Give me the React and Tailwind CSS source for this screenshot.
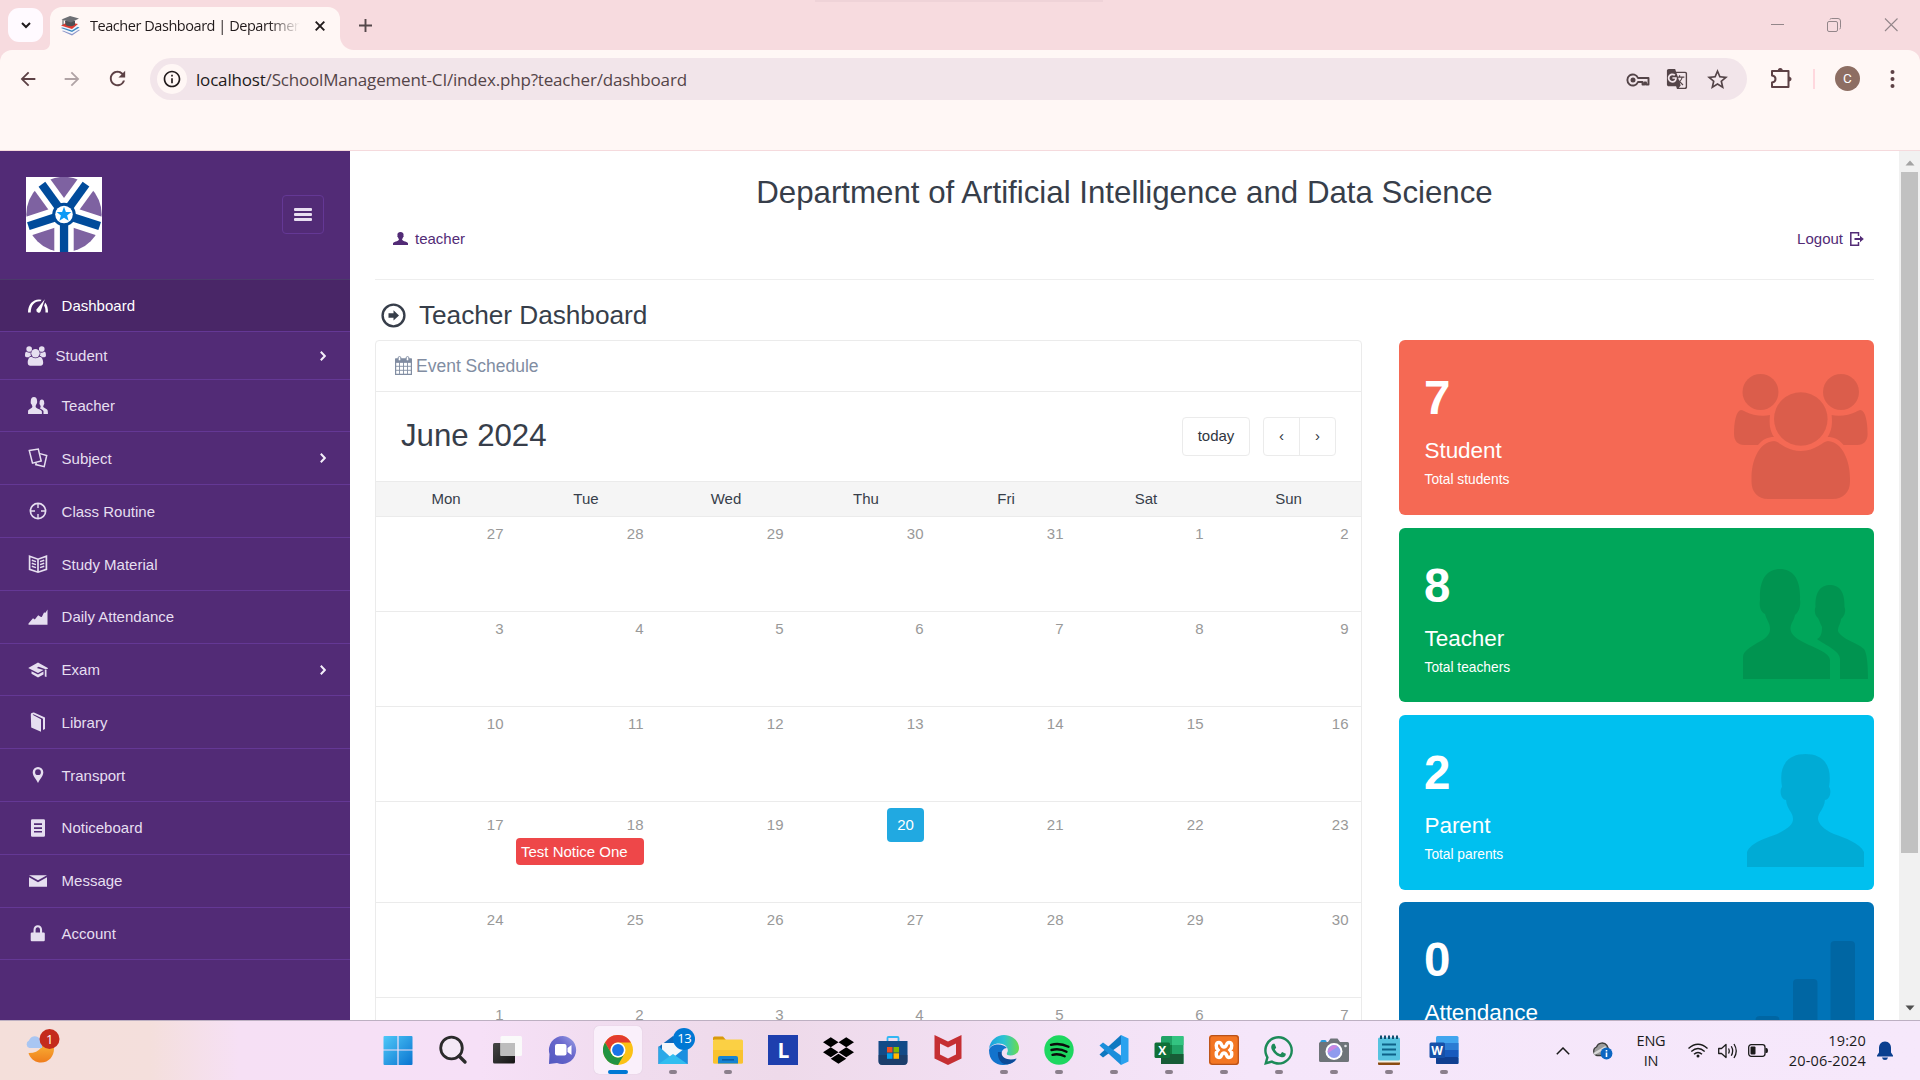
import React from "react";
import { MdStarBorder, MdOutlineInfo, MdArrowBack, MdArrowForward, MdRefresh, MdGTranslate } from "react-icons/md";
import { FaDropbox, FaWhatsapp } from "react-icons/fa";

const GROUP = (
  <>
    <ellipse cx="26.5" cy="18" rx="18" ry="18" />
    <ellipse cx="107" cy="18" rx="18" ry="18" />
    <circle cx="66.8" cy="45" r="26.8" />
    <path d="M7 36C2 37 0 48 0 60C0 67 4 71 10 71H24C29 65 34 63 40 63C36 57 35 50 36 41C28 43 18 41 12 38C10 37 9 36 7 36Z" />
    <path d="M126.600 36C131.600 37 133.600 48 133.600 60C133.600 67 129.600 71 123.600 71H109.600C104.600 65 99.600 63 93.600 63C97.600 57 98.600 50 97.600 41C105.600 43 115.600 41 121.600 38C123.600 37 124.600 36 126.600 36Z" />
    <path d="M40 67C24 68 17.500 88 17.500 104V108C17.500 118 24 125 34 125H99C109 125 116 118 116 108V104C116 88 109 68 94 67C89 67 82 77 66.800 77C52 77 45 67 40 67Z" />
  </>
);
const PAIR = (
  <>
    <path d="M0 110V88C0 82 8 78 14 74C22 70 27 66 27 60C27 54 24 52 22 45C17 43 16 36 17 31C16 10 24 0 37 0C50 0 58 10 57 31C58 36 56 43 52 46C51 52 47.500 54 47.500 60C48 66 54 70 62 74C72 79 87 84 87 91V110Z" />
    <path d="M97 110V90C97 82 82 76 74 70C78 68 79 64 79 58C77 54 76 51 75 49C72 47 71 41 72.500 38C72 22 78 16 87 16C96 16 102 22 101.500 38C103 41 102 47 98 50C98 54 95 57 95 62C98 70 115 74 121 80C124 84 125 96 125 110Z" />
  </>
);
const PERSON = (
  <path d="M0 113V98C4 88 20 84 30 80C42 74 46 70 46 65C46 58 40 56 39 46C34 46 32 36 35 33C31 10 42 0 58.500 0C75 0 86 10 82 33C85 36 83 46 78 46C77 56 71 58 71 65C72 70 76 75 87 80C98 84 113 89 117 98V113Z" />
);

/* ---------- Sidebar icons ---------- */
const s = { width: 20, height: 20, viewBox: "0 0 20 20", fill: "currentColor" };
const ln = { fill: "none", stroke: "currentColor", strokeWidth: 1.7 };
const GaugeIcon = () => (
  <svg {...s}>
    <path d="M0 16.500C0 8.500 4.500 3.800 11 3.500L13.500 3.700L12.600 5.300C6.500 4.900 3 9 2.700 16.500Z" />
    <path d="M16.800 3.300L12.700 15.200A2.200 2.200 0 1 1 8.500 13.600Z" />
    <path d="M17.200 6.500C19.300 9.300 20 12 20 16.500H17.500C17.500 13 17.200 11.500 16.100 9.600Z" />
  </svg>
);
const GroupIcon = () => <svg width="21" height="20" viewBox="0 0 134 126" fill="currentColor">{GROUP}</svg>;
const PairIcon = () => <svg width="20" height="17.500" viewBox="0 0 125 110" fill="currentColor">{PAIR}</svg>;
const DocsIcon = () => (
  <svg {...s}>
    <path {...ln} strokeWidth="1.500" d="M1.300 2.600L10.300 1L13.200 13L4.500 15.200Z" />
    <path {...ln} strokeWidth="1.500" d="M12 5.600L18.700 7.500L16.200 18.700L7.800 16.600L8.200 14.800" />
  </svg>
);
const TargetIcon = () => (
  <svg {...s}>
    <circle {...ln} cx="10" cy="10" r="7.600" />
    <path {...ln} strokeWidth="1.400" d="M10 3V7M10 13V17M3 10H7M13 10H17" />
  </svg>
);
const BookIcon = () => (
  <svg {...s}>
    <path {...ln} strokeWidth="1.700" d="M1.600 2.300L10 5.200L18.400 2.300V15.300L10 18.200L1.600 15.300ZM10 5V18" />
    <path {...ln} strokeWidth="1.500" d="M3.800 6.200L8 7.600M3.800 9.200L8 10.600M3.800 12.200L8 13.600M16.200 6.200L12 7.600M16.200 9.200L12 10.600M16.200 12.200L12 13.600" />
  </svg>
);
const ChartIcon = () => (
  <svg {...s}><path d="M0.500 17.700V16.500L5 11.200L6.800 12.500L10.200 8.200L12.500 9.800L13.800 10L16 5.500L17.500 5.700L19.500 2.500V17.700Z" /></svg>
);
const CapIcon = () => (
  <svg {...s}>
    <path d="M0.200 8L10 2.400L19.800 7.900V9H17L10.500 6.800L8.800 8L15.500 10L10 12.900Z" />
    <path d="M3.500 11.200L10 14.500L15.500 11.600V14.500L10 17.500L3.500 13.800Z" />
    <path d="M16.800 9.500H18.500V17L16.800 16.500Z" />
  </svg>
);
const LibIcon = () => (
  <svg {...s}>
    <path d="M2.800 2.500C2.800 1 5.300 0.200 6.500 0.800L17 5.500V17L15 18V6.800L5.500 2.200L4.600 2.800L13 7.200V19.800L3.200 15.500Z" />
  </svg>
);
const PinIcon = () => (
  <svg {...s}><path fillRule="evenodd" d="M10 2A5.300 5.300 0 0 1 15.300 7.300C15.300 11 12 14 10 18C8 14 4.700 11 4.700 7.300A5.300 5.300 0 0 1 10 2ZM10 4.300A2.900 2.900 0 1 0 10 10.100A2.900 2.900 0 1 0 10 4.300Z" /></svg>
);
const NoteIcon = () => (
  <svg {...s}><path fillRule="evenodd" d="M4.300 1.300H15.700Q17 1.300 17 2.600V17.400Q17 18.700 15.700 18.700H4.300Q3 18.700 3 17.400V2.600Q3 1.300 4.300 1.300ZM6 5.300V6.900H14V5.300ZM6 9.300V10.900H14V9.300ZM6 13V14.600H14V13Z" /></svg>
);
const MailIcon = () => (
  <svg {...s}><path d="M1 4.200H19L10 9.200ZM1 6.200L10 11.200L19 6.200V15.800H1Z" /></svg>
);
const LockIcon = () => (
  <svg {...s}><path fillRule="evenodd" d="M4 8.500H5.500V6C5.500 2.800 7.300 1.200 9.800 1.200C12.300 1.200 14.100 2.800 14.100 6V8.500H15.700Q16.800 8.500 16.800 9.600V16Q16.800 17.200 15.700 17.200H3.800Q2.700 17.200 2.700 16V9.600Q2.700 8.500 4 8.500ZM7.600 8.500H12V6C12 4.200 11.200 3.300 9.800 3.300C8.400 3.300 7.600 4.200 7.600 6Z" /></svg>
);

const menu = [
  { label: "Dashboard", icon: GaugeIcon, box: "h-[52px] bg-[#492667] text-white", t: "pt-px" },
  { label: "Student", icon: GroupIcon, box: "h-[48px]", t: "ml-[-6px] pt-px", arrow: true, group: true },
  { label: "Teacher", icon: PairIcon, box: "h-[52px]", t: "" },
  { label: "Subject", icon: DocsIcon, box: "h-[53px]", t: "pt-px", arrow: true },
  { label: "Class Routine", icon: TargetIcon, box: "h-[53px]", t: "pt-px" },
  { label: "Study Material", icon: BookIcon, box: "h-[53px]", t: "pt-px" },
  { label: "Daily Attendance", icon: ChartIcon, box: "h-[53px]", t: "" },
  { label: "Exam", icon: CapIcon, box: "h-[52px]", t: "", arrow: true },
  { label: "Library", icon: LibIcon, box: "h-[53px]", t: "pt-px" },
  { label: "Transport", icon: PinIcon, box: "h-[53px]", t: "pt-px" },
  { label: "Noticeboard", icon: NoteIcon, box: "h-[53px]", t: "" },
  { label: "Message", icon: MailIcon, box: "h-[53px]", t: "" },
  { label: "Account", icon: LockIcon, box: "h-[52px]", t: "" },
];

function CollegeLogo() {
  const spokes = [0, 72, 144, 216, 288];
  return (
    <svg width="76" height="75" viewBox="0 0 76 75">
      <rect width="76" height="75" fill="#fff" />
      <circle cx="38" cy="37.500" r="37.700" fill="#7e62a1" />
      {spokes.map((a) => <rect key={a} x="28.300" y="37.500" width="19.400" height="42" fill="#fff" transform={`rotate(${a} 38 37.500)`} />)}
      {spokes.map((a) => <rect key={a} x="33.900" y="37.500" width="8.300" height="37.500" fill="#004b9b" transform={`rotate(${a} 38 37.500)`} />)}
      <circle cx="38" cy="37.500" r="11.800" fill="#004b9b" />
      <circle cx="38" cy="37.500" r="8.800" fill="#fff" />
      <path fill="#0d9af6" d="M38 29.700L39.900 34.900L45.400 35.100L41.100 38.500L42.600 43.800L38 40.700L33.400 43.800L34.900 38.500L30.600 35.100L36.100 34.900Z" />
    </svg>
  );
}

function Sidebar() {
  return (
    <aside className="w-[350px] shrink-0 bg-[#522b76] text-[15px] text-[#e6dff0]">
      <div className="flex h-[129px] items-start justify-between border-b border-[#4b3a6b] pl-[26px] pr-[26px] pt-[26px]">
        <CollegeLogo />
        <button className="mt-[18px] flex h-[39px] w-[42px] items-center justify-center rounded-[4px] border border-[#643895]">
          <svg width="18" height="13" viewBox="0 0 18 13" fill="#e8def1">
            <rect width="18" height="3" rx="1" /><rect y="5" width="18" height="3" rx="1" /><rect y="10" width="18" height="3" rx="1" />
          </svg>
        </button>
      </div>
      <nav>
        {menu.map(({ label, icon: Icon, box, t, arrow, group }) => (
          <a key={label} className={`flex items-center border-b border-[#643895] pr-[24px] ${group ? "pl-[25px]" : "pl-[28px]"} ${box}`}>
            <span className={`flex shrink-0 ${group ? "w-[21px]" : "w-[20px]"}`}><Icon /></span>
            <span className={`${group ? "pl-[15.600px]" : "pl-[13.600px]"} leading-[20px] ${t}`}>{label}</span>
            {arrow && (
              <svg className="ml-auto" width="6" height="10" viewBox="0 0 6 10" fill="none" stroke="#f4effa" strokeWidth="2"><path d="M0.800 0.800L4.800 5L0.800 9.200" /></svg>
            )}
          </a>
        ))}
      </nav>
    </aside>
  );
}

/* ---------- Browser chrome ---------- */
function Favicon() {
  return (
    <svg width="20" height="20" viewBox="0 0 20 20">
      <path d="M2 15L12 19.500L20 14L10 10Z" fill="#8a94c8" /><path d="M1.500 14L12 18L20 13L10 9Z" fill="#f4f6fb" />
      <path d="M1 12L12 16L19.500 11.500L9 8Z" fill="#3a87c0" /><path d="M1 11L12 14.500L19 10L9 7Z" fill="#eef3fa" />
      <path d="M1 9.500L12 13L18 8L8 6Z" fill="#e03b32" />
      <path d="M5 5H15V9Q10 11.500 5.500 9Z" fill="#4f5054" /><path d="M1.500 3.500L10 0L19 2.500L11 6.500Z" fill="#6d6f74" /><path d="M3 4V9" stroke="#555" strokeWidth="1" />
    </svg>
  );
}

function KeyIcon() {
  return (
    <svg width="24" height="14" viewBox="0 0 24 14" fill="none" stroke="currentColor" strokeWidth="1.900">
      <path d="M12 5A5.500 5.500 0 1 0 12 9H16.500V11.500H18.500V9.500H20V11.500H22.500V5Z" strokeLinejoin="round" />
      <circle cx="7" cy="7" r="2.500" fill="currentColor" stroke="none" />
    </svg>
  );
}

function Browser() {
  return (
    <header className="h-[151px] shrink-0 bg-[#f7dbdf] font-['Open_Sans',sans-serif]">
      <div className="relative flex h-[50px] items-start">
        <div className="absolute left-[815px] top-0 h-[2px] w-[288px] bg-[#efd3d8]" />
        <button className="ml-[8px] mt-[8px] flex h-[34px] w-[35px] items-center justify-center rounded-[11px] bg-[#fffaff]">
          <svg width="10" height="7" viewBox="0 0 10 7" fill="none" stroke="#1f1a1c" strokeWidth="2"><path d="M1 1L5 5L9 1" /></svg>
        </button>
        <div className="mt-[43px] h-[7px] w-[7px] bg-[radial-gradient(circle_at_0_0,#f7dbdf_6.5px,#fff7f5_7.5px)]" />
        <div className="mt-[7px] flex h-[43px] w-[290px] items-center rounded-t-[12px] bg-[#fff7f5] pl-[10px] pr-[15px]">
          <span className="mt-[-6px]"><Favicon /></span>
          <span className="ml-[10px] mt-[-6px] w-[210px] overflow-hidden whitespace-nowrap bg-gradient-to-r from-[#211a1b] from-85% to-transparent bg-clip-text text-[14.500px] tracking-[-0.450px] text-transparent">Teacher Dashboard | Departmen</span>
          <svg className="ml-auto mt-[-6px]" width="10" height="10" viewBox="0 0 10 10" stroke="#211a1b" strokeWidth="1.900"><path d="M0.700 0.700L9.300 9.300M9.300 0.700L0.700 9.300" /></svg>
        </div>
        <div className="mt-[36px] h-[14px] w-[14px] bg-[radial-gradient(circle_at_100%_0,#f7dbdf_13.5px,#fff7f5_14.5px)]" />
        <svg className="ml-[5px] mt-[19px]" width="13" height="13" viewBox="0 0 13 13" stroke="#54484b" strokeWidth="1.900"><path d="M6.500 0V13M0 6.500H13" /></svg>
        <div className="ml-auto mr-[22px] mt-[18px] flex items-center gap-[43px]">
          <svg width="14" height="14" viewBox="0 0 14 14" stroke="#93868a"><path d="M1 6.500H14" /></svg>
          <svg width="14" height="14" viewBox="0 0 14 14" fill="none" stroke="#93868a"><rect x="0.500" y="3.500" width="10" height="10" rx="1.500" /><path d="M3 1.500Q3 0.500 4.500 0.500H11Q13.500 0.500 13.500 3V9.500Q13.500 11 12.500 11" /></svg>
          <svg width="14" height="14" viewBox="0 0 14 14" stroke="#93868a" strokeWidth="1.100"><path d="M1 0.500L13.500 13M13.500 0.500L1 13" /></svg>
        </div>
      </div>
      <div className="flex h-[101px] items-start rounded-t-[12px] border-b border-[#f5dadd] bg-[#fff7f5] pt-[8px] text-[#5d4145]">
        <MdArrowBack className="ml-[17px] mt-[10px]" size={22} />
        <MdArrowForward className="ml-[22px] mt-[10px] text-[#b0a3a5]" size={22} />
        <MdRefresh className="ml-[23px] mt-[9px]" size={23} />
        <div className="ml-[21px] flex h-[42px] w-[1597px] items-center rounded-full bg-[#f2e5ea] pl-[7px] text-[#544448]">
          <span className="flex h-[30px] w-[30px] items-center justify-center rounded-full bg-[#fff7f5]"><MdOutlineInfo size={20} color="#211a1b" /></span>
          <span className="ml-[9px] mt-[1px] whitespace-nowrap text-[17px] tracking-[-0.180px]"><span className="text-[#211a1b]">localhost</span>/SchoolManagement-CI/index.php?teacher/dashboard</span>
          <span className="ml-auto mt-[2px]"><KeyIcon /></span>
          <MdGTranslate className="ml-[16px]" size={22} />
          <MdStarBorder className="ml-[17px] mr-[17px]" size={25} />
        </div>
        <svg className="ml-[23px] mt-[9px]" width="22" height="22" viewBox="0 0 22 22" fill="none" stroke="#5d4145" strokeWidth="2">
          <path d="M2 4H18.500V20H2V15.500Q5.500 15 5.500 12Q5.500 9 2 8.500Z" strokeLinejoin="round" />
          <path d="M7.500 4Q8 1 10.300 1Q12.600 1 13 4ZM18.500 9.500Q21.500 10 21.500 12Q21.500 14 18.500 14.500Z" fill="#5d4145" stroke="none" />
        </svg>
        <div className="ml-[21px] mt-[11px] h-[20px] w-[2px] bg-[#ffd8de]" />
        <div className="ml-[20px] mt-[8px] flex h-[25px] w-[25px] items-center justify-center rounded-full bg-[#8d6e63] font-[Roboto,sans-serif] text-[13.500px] text-white">C</div>
        <svg className="ml-[30px] mt-[11px]" width="5" height="20" viewBox="0 0 5 20" fill="#5d4145"><circle cx="2.500" cy="3" r="2" /><circle cx="2.500" cy="10" r="2" /><circle cx="2.500" cy="17" r="2" /></svg>
      </div>
    </header>
  );
}

/* ---------- Calendar ---------- */
const weeks = [
  { days: [27, 28, 29, 30, 31, 1, 2], h: "h-[95px] pt-[12px]" },
  { days: [3, 4, 5, 6, 7, 8, 9], h: "h-[95px] pt-[12px]" },
  { days: [10, 11, 12, 13, 14, 15, 16], h: "h-[95px] pt-[12px]" },
  { days: [17, 18, 19, 20, 21, 22, 23], h: "h-[101px] pt-[18px]" },
  { days: [24, 25, 26, 27, 28, 29, 30], h: "h-[95px] pt-[12px]" },
  { days: [1, 2, 3, 4, 5, 6, 7], h: "h-[95px] pt-[12px]" },
];
const cols = "grid grid-cols-[repeat(6,140px)_1fr]";

function Calendar() {
  return (
    <section className="h-[760px] w-[987px] rounded-t-[4px] border border-[#ebebeb]">
      <div className="flex h-[51px] items-center border-b border-[#ebebeb] pl-[19px] text-[17.500px] text-[#818da2]">
        <svg className="mt-[-2px]" width="17" height="19" viewBox="0 0 17 19" fill="none" stroke="currentColor">
          <path strokeWidth="1.200" d="M0.600 3H16.400V18.400H0.600Z" /><path fill="currentColor" d="M0.600 3H16.400V6.300H0.600Z" />
          <path strokeWidth="0.900" d="M4.500 6V18M8.500 6V18M12.500 6V18M1 10.300H16M1 14.300H16" />
          <rect x="3.200" y="0.600" width="2.600" height="4.200" rx="1.200" fill="#fff" strokeWidth="1" /><rect x="11.200" y="0.600" width="2.600" height="4.200" rx="1.200" fill="#fff" strokeWidth="1" />
        </svg>
        <span className="ml-[4px]">Event Schedule</span>
      </div>
      <div className="flex h-[89px] items-center pl-[25px] pr-[25px] text-[#373e4a]">
        <h2 className="text-[31.250px] tracking-[-0.050px]">June 2024</h2>
        <button className="ml-auto h-[39px] w-[68px] rounded-[4px] border border-[#ebebeb] text-[15px] text-[#303641]">today</button>
        <div className="ml-[13px] flex h-[39px] w-[73px] rounded-[4px] border border-[#ebebeb] text-[15px] text-[#303641]">
          <button className="flex-1 border-r border-[#ebebeb]">‹</button>
          <button className="flex-1">›</button>
        </div>
      </div>
      <div className={`${cols} h-[36px] items-center border-y border-[#ebebeb] bg-[#f5f5f5] text-center text-[15px] text-[#373e4a]`}>
        {["Mon", "Tue", "Wed", "Thu", "Fri", "Sat", "Sun"].map((d) => <span key={d}>{d}</span>)}
      </div>
      {weeks.map((w, i) => (
        <div key={i} className={`${cols} ${w.h} border-b border-[#ebebeb] text-right text-[15px] leading-[10px] text-[#999]`}>
          {w.days.map((d, j) => (
            <div key={j} className="relative pr-[12.500px]">
              {i === 3 && j === 3
                ? <span className="absolute right-[12px] top-[-12px] flex h-[34px] w-[37px] items-center justify-center rounded-[4px] bg-[#21a9e1] leading-[34px] text-white">{d}</span>
                : d}
              {i === 3 && j === 1 && (
                <span className="absolute left-0 top-[18px] h-[27px] w-[128px] rounded-[4px] bg-[#ee4749] pl-[5px] text-left leading-[27px] text-white">Test Notice One</span>
              )}
            </div>
          ))}
        </div>
      ))}
    </section>
  );
}

function Tile({ n, title, sub, color, children }) {
  return (
    <div className={`relative rounded-[6px] pl-[25.500px] text-white ${color}`}>
      <div className="-ml-[0.500px] text-[47.500px] font-bold leading-[54px]">{n}</div>
      <div className="mt-[13px] text-[22.500px] leading-[26px] tracking-[-0.050px]">{title}</div>
      {sub && <div className="mt-[8px] text-[13.750px] leading-[16px]">{sub}</div>}
      {children}
    </div>
  );
}

function Main() {
  return (
    <main className="flex-1 overflow-hidden pl-[25px] text-[15px]">
      <div className="w-[1499px]">
        <div className="h-[129px] border-b border-[#eee] text-center">
          <h1 className="pt-[24px] text-[31.250px] leading-[36px] text-[#373e4a]">Department of Artificial Intelligence and Data Science</h1>
          <div className="mt-[18px] flex items-center justify-between pl-[18px] pr-[10px] text-[#522b76]">
            <span className="flex items-center gap-[7px] leading-[20px]">
              <svg className="mt-[-1px]" width="15" height="13" viewBox="0 0 117 113" preserveAspectRatio="none" fill="currentColor">{PERSON}</svg>teacher
            </span>
            <span className="flex items-center gap-[7px] leading-[20px]">Logout
              <svg className="mt-[-1px]" width="14" height="14" viewBox="0 0 14 14" fill="none" stroke="currentColor" strokeWidth="1.500"><path d="M8.500 4V0.800H0.800V13.200H8.500V10" /><path d="M4.500 7H11" strokeWidth="2" /><path d="M10 3.800L13.800 7L10 10.200Z" fill="currentColor" stroke="none" /></svg>
            </span>
          </div>
        </div>
        <div className="flex h-[60px] items-center pl-[6px] pt-[13px] text-[26.250px] leading-[30px] text-[#373e4a]">
          <svg className="mt-[-3px]" width="25" height="25" viewBox="0 0 25 25"><circle cx="12.500" cy="12.500" r="10.900" fill="none" stroke="currentColor" strokeWidth="2.400" /><path fill="currentColor" d="M7.500 10.200H12.500V7.300L18 12.500L12.500 17.500V14.800H7.500Z" /></svg>
          <span className="ml-[13px] mt-[-4px] tracking-[-0.050px]">Teacher Dashboard</span>
        </div>
        <div className="flex justify-between">
          <Calendar />
          <div className="flex w-[475px] flex-col gap-[13px]">
            <Tile n="7" title="Student" sub="Total students" color="h-[175px] pt-[31px] bg-[#f56954]">
              <svg className="absolute right-[6px] top-[34px] opacity-10" width="134" height="125" viewBox="0 0 134 125" fill="#000">{GROUP}</svg>
            </Tile>
            <Tile n="8" title="Teacher" sub="Total teachers" color="h-[174px] pt-[31px] bg-[#00a65a]">
              <svg className="absolute right-[6px] top-[41px] opacity-10" width="125" height="110" viewBox="0 0 125 110" fill="#000">{PAIR}</svg>
            </Tile>
            <Tile n="2" title="Parent" sub="Total parents" color="h-[175px] pt-[31px] bg-[#00c0ef]">
              <svg className="absolute right-[10px] top-[39px] opacity-10" width="117" height="113" viewBox="0 0 117 113" fill="#000">{PERSON}</svg>
            </Tile>
            <Tile n="0" title="Attendance" color="-mt-px h-[175px] pt-[31px] bg-[#0073b7]">
              <svg className="absolute right-[19px] top-[39px] opacity-10" width="138" height="113" viewBox="0 0 138 113" fill="#000"><rect x="0" y="100" width="24" height="13" rx="4" /><rect x="38.500" y="75" width="24" height="38" rx="4" /><rect x="76" y="38" width="24.500" height="75" rx="4" /><rect x="113.500" y="0" width="24.500" height="113" rx="4" /></svg>
            </Tile>
          </div>
        </div>
      </div>
    </main>
  );
}

/* ---------- Taskbar ---------- */
const Ic = ({ children }) => <svg width="30" height="30" viewBox="0 0 30 30">{children}</svg>;
const textIcon = "fill-white font-['Open_Sans',sans-serif] font-bold";

const apps = [
  { el: <Ic><defs><linearGradient id="win" x1="0" y1="0" x2="1" y2="1"><stop offset="0" stopColor="#4fc8f8" /><stop offset="1" stopColor="#0a74d0" /></linearGradient></defs><path fill="url(#win)" d="M1.500 1H14.400V14.400H0.500V2Q0.500 1 1.500 1ZM15.600 1H28.500Q29.500 1 29.500 2V14.400H15.600ZM0.500 15.600H14.400V30H1.500Q0.500 30 0.500 29ZM15.600 15.600H29.500V29Q29.500 30 28.500 30H15.600Z" /></Ic> },
  { el: <Ic><circle cx="13.500" cy="13" r="10.800" fill="#f3e9f5" stroke="#2b2b2b" strokeWidth="2.800" /><path d="M21 21L27 27" stroke="#2b2b2b" strokeWidth="3.400" strokeLinecap="round" /></Ic> },
  { el: <Ic><defs><linearGradient id="tv" x1="0" y1="0" x2="1" y2="1"><stop offset="0" stopColor="#474747" /><stop offset="1" stopColor="#151515" /></linearGradient></defs><rect x="0" y="8" width="22" height="20.500" rx="1.500" fill="url(#tv)" /><rect x="7.500" y="1" width="21.500" height="20" rx="1.500" fill="#fafafa" /><rect x="7.500" y="8" width="14.500" height="13" fill="#bdbdbd" /></Ic> },
  { el: <Ic><defs><linearGradient id="ch" x1="0" y1="1" x2="1" y2="0"><stop offset="0" stopColor="#5058c0" /><stop offset="0.600" stopColor="#6a68cc" /><stop offset="1" stopColor="#9da3e8" /></linearGradient></defs><path fill="url(#ch)" d="M15 1A14 14 0 1 1 9 28L1 29L1.500 19A14 14 0 0 1 15 1Z" /><rect x="7" y="9" width="11.500" height="11.500" rx="2" fill="#fff" /><path d="M19.500 13L23.500 10V20L19.500 17Z" fill="#fff" /></Ic> },
  { active: true, el: <Ic><circle cx="15" cy="15" r="15" fill="#fbc116" /><path fill="#e33b2e" d="M2 7.500A15 15 0 0 1 28 7.500H15A7.500 7.500 0 0 0 8.500 18.800Z" /><path fill="#229342" d="M2 7.500L8.500 18.800A7.500 7.500 0 0 0 21.500 18.800L15 30A15 15 0 0 1 2 7.500Z" /><circle cx="15" cy="15" r="7.500" fill="#fff" /><circle cx="15" cy="15" r="5.900" fill="#1a73e8" /></Ic> },
  { dot: true, badge: "13", el: <Ic><path d="M0.500 12L15 1L29.500 12V29H0.500Z" fill="#0f6cbd" /><path d="M4 8H26V18L15 24L4 18Z" fill="#f5f7fa" /><path d="M0.500 11L20 29H0.500Z" fill="#2aa9e8" /><path d="M29.500 11L7 29H29.500Z" fill="#1a8fe0" /><path d="M0.500 29L15 19L29.500 29Z" fill="#31bdf0" /></Ic> },
  { dot: true, el: <Ic><path d="M0 3Q0 1.500 1.500 1.500H10L13 5H0Z" fill="#d99a0b" /><rect y="4.500" width="30" height="24" rx="1.500" fill="#fbd044" /><path d="M0 15H30V27Q30 28.500 28.500 28.500H1.500Q0 28.500 0 27Z" fill="#f9c22f" /><path d="M5 28.500V23Q5 21 7 21H23Q25 21 25 23V28.500Z" fill="#1683d2" /><path d="M9 24.800H21" stroke="#0c5a9e" strokeWidth="1.500" /></Ic> },
  { el: <Ic><rect width="30" height="30" fill="#1e3fae" /><text x="9.500" y="22.500" fontSize="21" className={textIcon}>L</text></Ic> },
  { el: <FaDropbox size={31} color="#000" /> },
  { el: <Ic><path d="M9.500 7V3Q9.500 2 10.500 2H19.500Q20.500 2 20.500 3V7" fill="none" stroke="#33b7f3" strokeWidth="1.800" /><path d="M0.500 6H29.500V26Q29.500 30 25.500 30H4.500Q0.500 30 0.500 26Z" fill="#134b87" /><path d="M0.500 20H29.500V26Q29.500 30 25.500 30H4.500Q0.500 30 0.500 26Z" fill="#20395f" opacity=".7" /><rect x="9" y="12" width="5.500" height="5.500" fill="#f25022" /><rect x="15.500" y="12" width="5.500" height="5.500" fill="#7fba00" /><rect x="9" y="18.300" width="5.500" height="5.500" fill="#00a4ef" /><rect x="15.500" y="18.300" width="5.500" height="5.500" fill="#ffb900" /></Ic> },
  { el: <Ic><path fill="#c52f33" d="M1.500 0L15 6.500L28.500 0V23.500L15 30L1.500 23.500ZM7 8.500V19.500L15 23.500L23 19.500V8.500L15 12.500Z" fillRule="evenodd" /></Ic> },
  { dot: true, el: <Ic><defs><linearGradient id="ed" x1="0" y1="0" x2="1" y2="0"><stop offset="0" stopColor="#1a9fe0" /><stop offset="0.500" stopColor="#2cc3d2" /><stop offset="1" stopColor="#6bdc4b" /></linearGradient></defs><path fill="#1273cc" d="M0 15C2 8 14 8 18 13C14 13 12 17 12.500 20C13 25 20 29 27.500 24.500C20 33 0 33 0 15Z" /><path fill="#0c4b98" d="M9 17C8 24 13 31 20 29C24 28 27 25 27.500 23.500C21 26 12 24 12.500 17Z" /><path fill="url(#ed)" d="M0 14C1 5 8 0 15 0C24 0 30 6.500 30 13C30 18 26 20.500 21.500 20.500C17 20.500 17.500 18.500 18.500 17C20 13 16 8.500 10 8.500C5 8.500 1 11 0 14Z" /></Ic> },
  { dot: true, el: <Ic><circle cx="15" cy="15" r="14.700" fill="#1ed760" /><path d="M7 9.800Q16 7.500 24.500 11.800M7.500 15Q15.500 13 22.500 16.700M8.500 19.800Q15 18.300 20.700 21.300" fill="none" stroke="#0b0b0b" strokeWidth="2.400" strokeLinecap="round" /></Ic> },
  { dot: true, el: <Ic><path fill="#0f78c1" d="M22 0L24 8L4 22.500L0.500 19.500Z" /><path fill="#1b8edb" d="M0.500 10.500L4 7.500L24 22L22 30Z" /><path fill="#2aa2ef" d="M22 0L29.500 3.500V26.500L22 30Z" /></Ic> },
  { dot: true, el: <Ic><rect x="7" y="1" width="22.500" height="28" rx="1.500" fill="#21a366" /><rect x="18" y="1" width="11.500" height="9" fill="#33c481" /><rect x="7" y="10" width="11" height="9" fill="#107c41" /><rect x="7" y="19" width="22.500" height="10" fill="#185c37" /><rect x="0.500" y="7.500" width="15.500" height="15.500" rx="1.500" fill="#0f7038" /><text x="4.300" y="19.500" fontSize="12" className={textIcon}>X</text></Ic> },
  { dot: true, el: <Ic><rect width="30" height="30" rx="3" fill="#f37623" /><rect x="0.700" y="0.700" width="28.600" height="28.600" rx="3" fill="none" stroke="#b8521a" strokeWidth="1.200" /><path d="M10 7.500C6.500 7.500 6.500 12.500 9 15C6.500 17.500 6.500 22.500 10 22.500C13 22.500 12 18 15 18C18 18 17 22.500 20 22.500C23.500 22.500 23.500 17.500 21 15C23.500 12.500 23.500 7.500 20 7.500C17 7.500 18 12 15 12C12 12 13 7.500 10 7.500Z" fill="none" stroke="#fff" strokeWidth="3.400" /></Ic> },
  { dot: true, el: <FaWhatsapp size={33} color="#1c8a58" /> },
  { dot: true, el: <Ic><rect x="1.500" y="5" width="6" height="4" rx="1.500" fill="#2a9bd8" /><path d="M9 7L11.500 3.500H18.500L21 7H28.500Q30 7 30 8.500V25.500Q30 27 28.500 27H1.500Q0 27 0 25.500V8.500Q0 7 1.500 7Z" fill="#6e7479" /><circle cx="15" cy="16.500" r="8.500" fill="#fff" /><circle cx="15" cy="16.500" r="6.500" fill="#8f9bee" /><path d="M9 18A6.500 6.500 0 0 1 19 11.500Z" fill="#cb87e0" /><circle cx="26.500" cy="11" r="1.300" fill="#dfe3e6" /></Ic> },
  { dot: true, el: <Ic><rect x="4" y="26" width="22" height="4" rx="1" fill="#8a4a12" /><rect x="4" y="24" width="22" height="3.500" fill="#f4efe6" /><rect x="4" y="2.500" width="22" height="23" rx="1.500" fill="#57c3e0" /><path d="M8 9.500H22M8 14.500H22M8 19.500H22" stroke="#0e6288" strokeWidth="2" /><path d="M7 0.500V4M11 0.500V4M15 0.500V4M19 0.500V4M23 0.500V4" stroke="#124e6e" strokeWidth="2" /></Ic> },
  { dot: true, el: <Ic><rect x="7" y="1" width="22.500" height="28" rx="1.500" fill="#41a5ee" /><rect x="7" y="8" width="22.500" height="7" fill="#2b7cd3" /><rect x="7" y="15" width="22.500" height="7" fill="#185abd" /><rect x="7" y="22" width="22.500" height="7" rx="1" fill="#103f91" /><rect x="0.500" y="7.500" width="15.500" height="15.500" rx="1.500" fill="#1650a8" /><text x="2.200" y="19.500" fontSize="12" className={textIcon}>W</text></Ic> },
];

function Taskbar() {
  return (
    <footer className="flex h-[60px] shrink-0 border-t border-[#bdb0c2] bg-[linear-gradient(90deg,#f4dfda_0px,#f4dfdc_150px,#f6e0f5_240px,#f6e0f7_480px,#f0dcee_640px,#eedaea_780px,#f2dff3_1000px,#f5e6fa_1250px,#f6e8fb_1920px)] font-['Open_Sans',sans-serif] text-[#1b1b1b]">
      <div className="w-[374px] pl-[25px] pt-[7px]">
        <svg width="38" height="38" viewBox="0 0 38 38">
          <defs><linearGradient id="moon" x1="0" y1="0" x2="0" y2="1"><stop offset="0" stopColor="#fcc33f" /><stop offset="1" stopColor="#ef7d1c" /></linearGradient></defs>
          <path d="M18 9C20 17 15 25 4 25C3.500 25 3.500 25.500 4 26.500C6.500 32 11 34.500 16 34.500C24 34.500 29 28 29 21C29 14 24 9 18 9Z" fill="url(#moon)" />
          <path d="M4.500 20A4 4 0 0 1 4 12.500A6 6 0 0 1 14 10Q18 11 17 20Z" fill="#a9c6f2" />
          <circle cx="24.500" cy="11" r="10" fill="#c42b1c" />
          <text x="21" y="16" fontSize="13" className="fill-white">1</text>
        </svg>
      </div>
      <div className="flex gap-[7.050px] pt-[5px]">
        {apps.map((a, i) => (
          <div key={i} className={`relative flex h-[48px] w-[48px] items-center justify-center rounded-[5px] ${a.active ? "bg-[#faf0fb] shadow-[0_0_1px_#c9b8cc]" : ""}`}>
            {a.el}
            {a.badge && <span className="absolute left-[24px] top-[2px] flex h-[22px] w-[22px] items-center justify-center rounded-full bg-[#0078d4] text-[13px] tracking-[-0.500px] text-white">{a.badge}</span>}
            {a.active && <span className="absolute bottom-0 h-[4px] w-[20px] rounded-full bg-[#0078d4]" />}
            {a.dot && <span className="absolute bottom-0 h-[4px] w-[8px] rounded-full bg-[#8b7f8c]" />}
          </div>
        ))}
      </div>
      <div className="ml-auto flex items-center pr-[27px] text-[14.500px] leading-[20px]">
        <svg width="14" height="8" viewBox="0 0 14 8" fill="none" stroke="#1b1b1b" strokeWidth="1.500"><path d="M0.800 7.200L7 1L13.200 7.200" /></svg>
        <svg className="ml-[22px]" width="21" height="18" viewBox="0 0 21 18"><path d="M5 13.500A4.500 4.500 0 0 1 4.500 5A6 6 0 0 1 15 3.500L17 8V13.500Z" fill="#9c9c9c" stroke="#3c3c3c" strokeWidth="1.300" /><path d="M2 12L14 5" stroke="#d9d9d9" strokeWidth="2.500" /><circle cx="14.500" cy="11.500" r="5.900" fill="#0c66c2" /><path d="M14.500 8V9.500M14.500 10.600V15" stroke="#fff" strokeWidth="1.600" /></svg>
        <div className="ml-[21px] w-[34px] text-center tracking-[-0.200px]">ENG<br />IN</div>
        <svg className="ml-[20px]" width="20" height="15" viewBox="0 0 20 15" fill="none" stroke="#1b1b1b" strokeWidth="1.400"><path d="M0.500 5.500Q10 -3 19.500 5.500M3.300 8.500Q10 2.500 16.700 8.500M6 11.300Q10 7.500 14 11.300" /><circle cx="10" cy="13" r="1.500" fill="#1b1b1b" stroke="none" /></svg>
        <svg className="ml-[10px]" width="20" height="16" viewBox="0 0 20 16" fill="none" stroke="#1b1b1b" strokeWidth="1.300"><path d="M0.700 5.500H3.500L8 1.500V14.500L3.500 10.500H0.700Z" strokeLinejoin="round" /><path d="M10.500 5.500Q12 8 10.500 10.500M13.300 3.300Q16 8 13.300 12.700M16 1Q20.500 8 16 15" /></svg>
        <svg className="ml-[10px]" width="20" height="13" viewBox="0 0 20 13"><rect x="0.700" y="0.700" width="16.300" height="11.600" rx="2.500" fill="none" stroke="#1b1b1b" strokeWidth="1.300" /><rect x="2.500" y="2.500" width="5" height="8" rx="1" fill="#1b1b1b" /><path d="M17.500 4H18.500Q20 4 20 6.500Q20 9 18.500 9H17.500Z" fill="#1b1b1b" /></svg>
        <div className="ml-[19px] w-[79px] whitespace-nowrap text-right tracking-[0.150px]">19:20<br />20-06-2024</div>
        <svg className="ml-[11px]" width="16" height="19" viewBox="0 0 16 19" fill="#0a3f8f"><path d="M8 0.500C12 0.500 14 3.500 14 7V11.500L16 14.500V15.500H0V14.500L2 11.500V7C2 3.500 4 0.500 8 0.500Z" /><path d="M5 16.500H11Q10.500 19 8 19Q5.500 19 5 16.500Z" /></svg>
      </div>
    </footer>
  );
}

export default function App() {
  return (
    <div className="flex h-[1080px] w-[1920px] flex-col overflow-hidden bg-white font-['Liberation_Sans',Arial,sans-serif]">
      <Browser />
      <div className="flex h-[869px] overflow-hidden">
        <Sidebar />
        <Main />
        <div className="flex w-[21px] flex-col items-center bg-[#f1f1f1]">
          <svg className="mt-[9px] shrink-0" width="10" height="6" viewBox="0 0 10 6" fill="#a3a3a3"><path d="M5 0.500L9.500 5.500H0.500Z" /></svg>
          <div className="mt-[6px] h-[681px] w-[17px] shrink-0 bg-[#c1c1c1]" />
          <svg className="mb-[9px] mt-auto shrink-0" width="10" height="6" viewBox="0 0 10 6" fill="#505050"><path d="M0.500 0.500H9.500L5 5.500Z" /></svg>
        </div>
      </div>
      <Taskbar />
    </div>
  );
}
